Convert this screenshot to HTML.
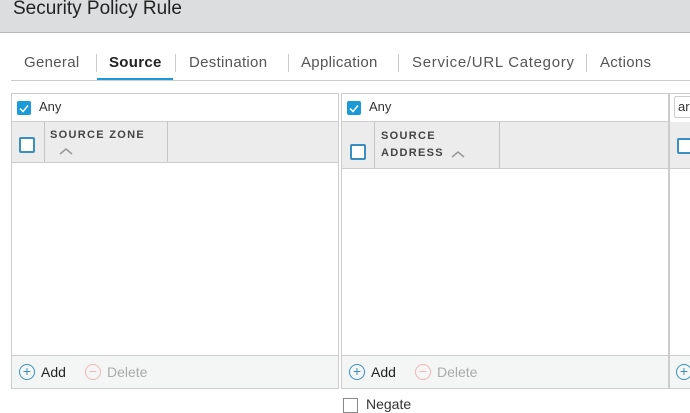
<!DOCTYPE html><html><head><style>
body{margin:0;width:690px;height:402px;overflow:hidden;background:#fff;font-family:"Liberation Sans",sans-serif;position:relative}
.a{position:absolute}
.hdr{left:0;top:0;width:690px;height:32px;background:#dcdddf;border-bottom:1px solid #b5b7ba}
.hdr span{position:absolute;left:13px;top:-2px;font-size:19px;color:#222}
.tab{top:54px;font-size:15px;color:#555;letter-spacing:.3px}
.sep{top:54px;width:1px;height:18px;background:#ccc}
.panel{top:93px;height:294px;border:1px solid #ccc;background:#fff}
.any{left:0;top:0;right:0;height:27px;border-bottom:1px solid #ccc}
.cb{width:14px;height:14px;background:#1a9bd7;border-radius:2px}
.cbo{width:12px;height:12px;border:2px solid #3a8fc0;border-radius:2px;background:#fff}
.th{left:0;right:0;top:28px;background:#ececec;border-bottom:1px solid #ccc}
.vl{top:0;bottom:0;width:1px;background:#c4c4c4}
.col{font-size:11px;font-weight:bold;letter-spacing:1.3px;color:#444;line-height:17px}
.ft{left:0;right:0;bottom:0;height:32px;background:#f4f6f6;border-top:1px solid #ccc}
.ic{width:14px;height:14px;border-radius:50%;border:1.5px solid;font-size:14px;line-height:13px;text-align:center}
</style></head><body>
<div class="a hdr"><span>Security Policy Rule</span></div>
<div class="a tab" style="left:24px">General</div>
<div class="a sep" style="left:96px"></div>
<div class="a tab" style="left:109px;color:#222;font-weight:bold">Source</div>
<div class="a sep" style="left:175px"></div>
<div class="a tab" style="left:189px">Destination</div>
<div class="a sep" style="left:288px"></div>
<div class="a tab" style="left:301px">Application</div>
<div class="a sep" style="left:398px"></div>
<div class="a tab" style="left:412px;letter-spacing:.7px">Service/URL Category</div>
<div class="a sep" style="left:586px"></div>
<div class="a tab" style="left:600px">Actions</div>
<div class="a" style="left:11px;top:80px;width:679px;height:1px;background:#ccc"></div>
<div class="a" style="left:97px;top:78px;width:76px;height:2px;background:#1a9bd7"></div>

<div class="a panel" style="left:11px;width:326px">
 <div class="a any"><div class="a cb" style="left:5px;top:7px"><svg width="14" height="14"><path d="M3 7.5l3 3 5-6" stroke="#fff" stroke-width="1.5" fill="none"/></svg></div><div class="a" style="left:27px;top:5px;font-size:13px;color:#333">Any</div></div>
 <div class="a th" style="height:40px"><div class="a cbo" style="left:7px;top:15px"></div><div class="a vl" style="left:32px"></div><div class="a vl" style="left:155px"></div>
  <div class="a col" style="left:38px;top:5px">SOURCE ZONE</div><svg class="a" style="left:47px;top:25px" width="14" height="8"><path d="M1 7l6-5 6 5" stroke="#999" stroke-width="1.5" fill="none"/></svg></div>
 <div class="a ft"><div class="a ic" style="left:7px;top:8px;border-color:#3a8fc0;color:#3a8fc0">+</div><div class="a" style="left:29px;top:8px;font-size:14px;color:#222">Add</div>
 <div class="a ic" style="left:73px;top:8px;border-color:#f0b4b4;color:#f0b4b4">−</div><div class="a" style="left:95px;top:8px;font-size:14px;color:#aaa">Delete</div></div>
</div>

<div class="a panel" style="left:341px;width:326px">
 <div class="a any"><div class="a cb" style="left:5px;top:7px"><svg width="14" height="14"><path d="M3 7.5l3 3 5-6" stroke="#fff" stroke-width="1.5" fill="none"/></svg></div><div class="a" style="left:27px;top:5px;font-size:13px;color:#333">Any</div></div>
 <div class="a th" style="height:46px"><div class="a cbo" style="left:8px;top:22px"></div><div class="a vl" style="left:32px"></div><div class="a vl" style="left:157px"></div>
  <div class="a col" style="left:39px;top:6px">SOURCE<br>ADDRESS</div><svg class="a" style="left:109px;top:28px" width="14" height="8"><path d="M1 7l6-5 6 5" stroke="#999" stroke-width="1.5" fill="none"/></svg></div>
 <div class="a ft"><div class="a ic" style="left:7px;top:8px;border-color:#3a8fc0;color:#3a8fc0">+</div><div class="a" style="left:29px;top:8px;font-size:14px;color:#222">Add</div>
 <div class="a ic" style="left:73px;top:8px;border-color:#f0b4b4;color:#f0b4b4">−</div><div class="a" style="left:95px;top:8px;font-size:14px;color:#aaa">Delete</div></div>
</div>

<div class="a panel" style="left:669px;width:30px">
 <div class="a" style="left:4px;top:2px;width:30px;height:20px;border:1px solid #ccc;border-radius:2px;font-size:13px;line-height:20px;padding-left:3px;color:#333">ar</div>
 <div class="a any" style="border:none"></div>
 <div class="a th" style="height:46px"><div class="a cbo" style="left:7px;top:16px"></div></div>
 <div class="a ft"><div class="a ic" style="left:6px;top:8px;border-color:#3a8fc0;color:#3a8fc0">+</div></div>
</div>
<div class="a" style="left:343px;top:398px;width:13px;height:13px;border:1px solid #888"></div>
<div class="a" style="left:366px;top:397px;font-size:14px;line-height:14px;color:#333">Negate</div>
</body></html>
